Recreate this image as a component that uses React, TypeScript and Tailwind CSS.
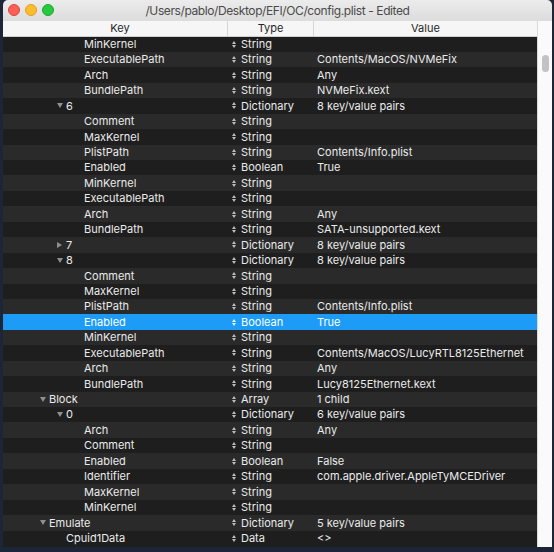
import type { ReactNode } from "react";

type Row = {
  key: string;
  level: 1 | 2 | 3;
  type: string;
  value?: string;
  arrow?: "open" | "closed";
};

const rows: Row[] = [
  { key: "MinKernel", level: 3, type: "String" },
  { key: "ExecutablePath", level: 3, type: "String", value: "Contents/MacOS/NVMeFix" },
  { key: "Arch", level: 3, type: "String", value: "Any" },
  { key: "BundlePath", level: 3, type: "String", value: "NVMeFix.kext" },
  { key: "6", level: 2, type: "Dictionary", value: "8 key/value pairs", arrow: "open" },
  { key: "Comment", level: 3, type: "String" },
  { key: "MaxKernel", level: 3, type: "String" },
  { key: "PlistPath", level: 3, type: "String", value: "Contents/Info.plist" },
  { key: "Enabled", level: 3, type: "Boolean", value: "True" },
  { key: "MinKernel", level: 3, type: "String" },
  { key: "ExecutablePath", level: 3, type: "String" },
  { key: "Arch", level: 3, type: "String", value: "Any" },
  { key: "BundlePath", level: 3, type: "String", value: "SATA-unsupported.kext" },
  { key: "7", level: 2, type: "Dictionary", value: "8 key/value pairs", arrow: "closed" },
  { key: "8", level: 2, type: "Dictionary", value: "8 key/value pairs", arrow: "open" },
  { key: "Comment", level: 3, type: "String" },
  { key: "MaxKernel", level: 3, type: "String" },
  { key: "PlistPath", level: 3, type: "String", value: "Contents/Info.plist" },
  { key: "Enabled", level: 3, type: "Boolean", value: "True" },
  { key: "MinKernel", level: 3, type: "String" },
  { key: "ExecutablePath", level: 3, type: "String", value: "Contents/MacOS/LucyRTL8125Ethernet" },
  { key: "Arch", level: 3, type: "String", value: "Any" },
  { key: "BundlePath", level: 3, type: "String", value: "Lucy8125Ethernet.kext" },
  { key: "Block", level: 1, type: "Array", value: "1 child", arrow: "open" },
  { key: "0", level: 2, type: "Dictionary", value: "6 key/value pairs", arrow: "open" },
  { key: "Arch", level: 3, type: "String", value: "Any" },
  { key: "Comment", level: 3, type: "String" },
  { key: "Enabled", level: 3, type: "Boolean", value: "False" },
  { key: "Identifier", level: 3, type: "String", value: "com.apple.driver.AppleTyMCEDriver" },
  { key: "MaxKernel", level: 3, type: "String" },
  { key: "MinKernel", level: 3, type: "String" },
  { key: "Emulate", level: 1, type: "Dictionary", value: "5 key/value pairs", arrow: "open" },
  { key: "Cpuid1Data", level: 2, type: "Data", value: "<>" },
];

const SELECTED = 18;

// where the disclosure slot begins for each depth
const indent: Record<number, string> = {
  1: "pl-[37px]",
  2: "pl-[54px]",
  3: "pl-[72px]",
};

function Disclosure({ arrow }: { arrow?: "open" | "closed" }) {
  return (
    <span className="w-[9px] h-full flex items-center shrink-0">
      {arrow === "open" && (
        <svg width="6" height="5" viewBox="0 0 6 5">
          <path d="M0 0 L6 0 L3 5 Z" fill="#8f8f8f" />
        </svg>
      )}
      {arrow === "closed" && (
        <svg width="5" height="6" viewBox="0 0 5 6">
          <path d="M0 0 L5 3 L0 6 Z" fill="#8f8f8f" />
        </svg>
      )}
    </span>
  );
}

function Stepper({ light }: { light: boolean }) {
  const c = light ? "#e8f3ff" : "#bdbdbd";
  return (
    <svg width="4" height="7" viewBox="0 0 4 7" className="shrink-0">
      <path d="M0 3 L2 0 L4 3 Z" fill={c} />
      <path d="M0 4 L2 7 L4 4 Z" fill={c} />
    </svg>
  );
}

function HeaderCell({ children, className }: { children: ReactNode; className: string }) {
  return (
    <div className={`h-full flex items-center justify-center relative ${className}`}>
      {children}
    </div>
  );
}

function TrafficLight({ color, ring }: { color: string; ring: string }) {
  return <span className={`w-[12px] h-[12px] rounded-full ${color} border ${ring}`} />;
}

export default function App() {
  return (
    <div
      className="w-[554px] h-[552px] overflow-hidden bg-[#1d2539]"
      style={{ fontFamily: "Inter, 'Liberation Sans', sans-serif" }}
    >
      <div className="ml-[3px] w-[549px] h-[547px] flex flex-col rounded-t-[5px] overflow-hidden bg-[#1e1e1e]">
        {/* Title bar */}
        <div className="h-[21px] shrink-0 relative flex items-center justify-center bg-gradient-to-b from-[#ececec] to-[#dcdcdc]">
          <div className="absolute left-[5px] top-[4px] flex gap-[5px]">
            <TrafficLight color="bg-[#fc5f57]" ring="border-[#e0443e]" />
            <TrafficLight color="bg-[#fdbc2e]" ring="border-[#dea123]" />
            <TrafficLight color="bg-[#28c840]" ring="border-[#1aab29]" />
          </div>
          <span className="text-[12px] text-[#4a4a4a] tracking-[-0.4px]">
            /Users/pablo/Desktop/EFI/OC/config.plist - Edited
          </span>
        </div>

        {/* Body */}
        <div className="flex-1 flex min-h-0">
          <div className="w-[534px] flex flex-col">
            {/* Column header */}
            <div className="h-[15.5px] shrink-0 flex bg-[#f6f6f6] border-b border-[#cfcfcf] text-[11px] text-[#262626]">
              <HeaderCell className="w-[224px] pl-[10px]">Key</HeaderCell>
              <HeaderCell className="w-[86px] border-l border-[#d6d6d6]">Type</HeaderCell>
              <HeaderCell className="flex-1 border-l border-[#d6d6d6]">Value</HeaderCell>
            </div>

            {/* Rows */}
            <div className="flex flex-col text-[11px]">
              {rows.map((r, i) => {
                const selected = i === SELECTED;
                const bg = selected
                  ? "bg-[#1c9cf6] text-white"
                  : i % 2 === 0
                  ? "bg-[#1e1e1e] text-[#ebebeb]"
                  : "bg-[#2a2a2a] text-[#ebebeb]";
                return (
                  <div key={i} className={`h-[15.44px] shrink-0 flex items-center ${bg}`}>
                    <div className={`w-[224px] h-full flex items-center ${indent[r.level]}`}>
                      <Disclosure arrow={r.arrow} />
                      <span>{r.key}</span>
                    </div>
                    <div className="w-[86px] h-full flex items-center pl-[5px] gap-[5px]">
                      <Stepper light={selected} />
                      <span>{r.type}</span>
                    </div>
                    <div className="flex-1 h-full flex items-center pl-[4px] whitespace-nowrap">
                      {r.value}
                    </div>
                  </div>
                );
              })}
            </div>
          </div>

          {/* Scrollbar */}
          <div className="w-[15px] bg-[#fafafa] border-l border-[#d9d9d9] pt-[34px] flex justify-center">
            <div className="w-[7px] h-[17px] rounded-full bg-[#c2c2c2]" />
          </div>
        </div>
      </div>
    </div>
  );
}
